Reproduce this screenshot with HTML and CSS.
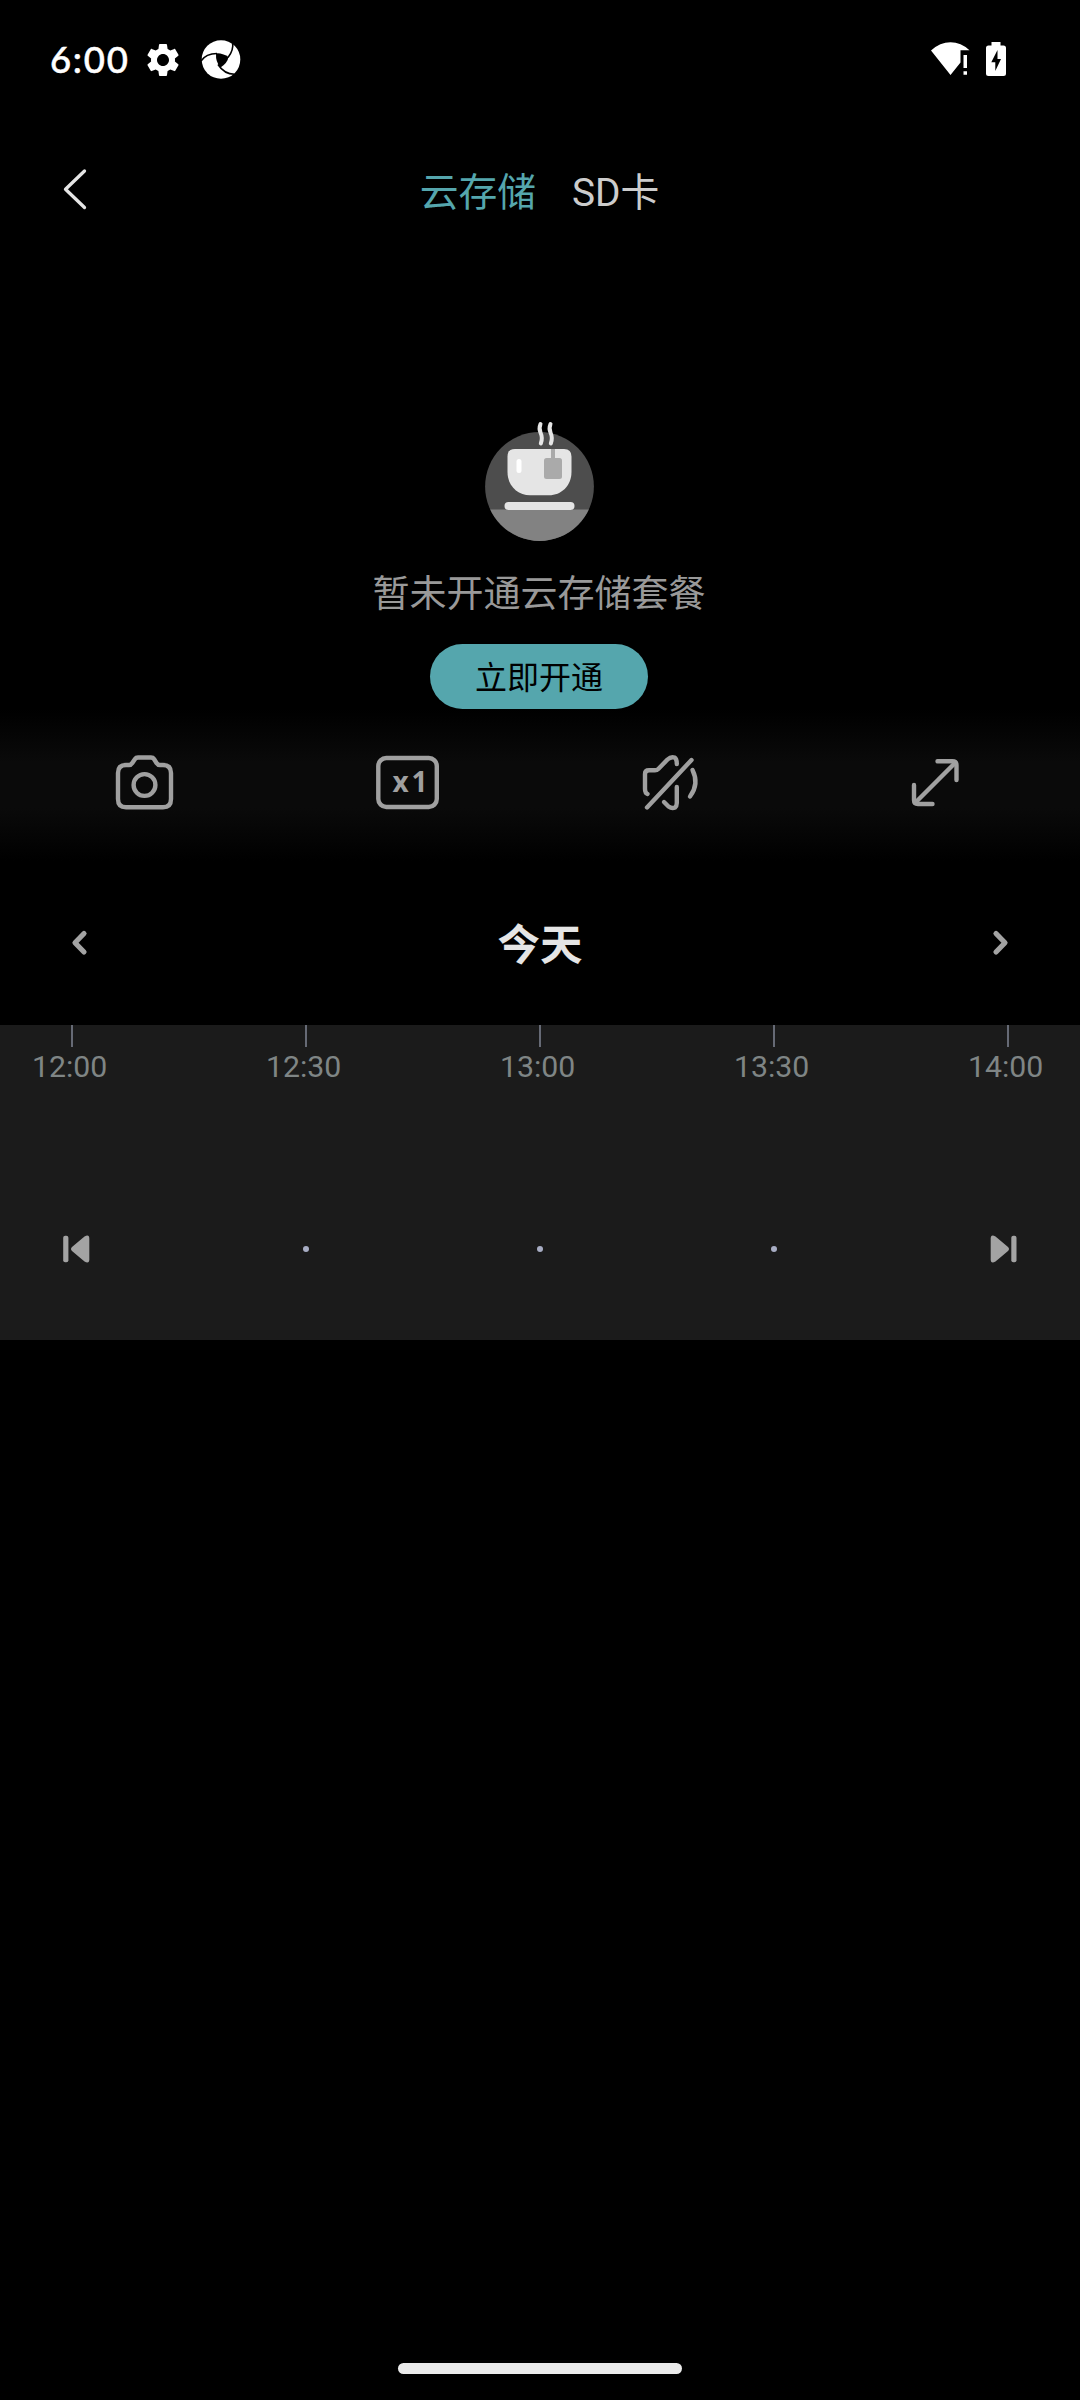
FILE: index.html
```html
<!DOCTYPE html>
<html lang="zh-CN">
<head>
<meta charset="utf-8">
<title>云存储</title>
<link rel="stylesheet" href="styles.css">
</head>
<body>
<div class="screen">
  <div class="status">
    <div class="status-left">
      <span class="clock">6:00</span>
      <svg class="gear" width="40" height="40" viewBox="0 0 24 24"><path fill="#fff" d="M19.14 12.94c.04-.3.06-.61.06-.94 0-.32-.02-.64-.07-.94l2.03-1.58c.18-.14.23-.41.12-.61l-1.92-3.32c-.12-.22-.37-.29-.59-.22l-2.39.96c-.5-.38-1.03-.7-1.62-.94l-.36-2.54c-.04-.24-.24-.41-.48-.41h-3.84c-.24 0-.43.17-.47.41l-.36 2.54c-.59.24-1.13.57-1.62.94l-2.39-.96c-.22-.08-.47 0-.59.22L2.74 8.87c-.12.21-.08.47.12.61l2.03 1.58c-.05.3-.09.63-.09.94s.02.64.07.94l-2.03 1.58c-.18.14-.23.41-.12.61l1.92 3.32c.12.22.37.29.59.22l2.39-.96c.5.38 1.03.7 1.62.94l.36 2.54c.05.24.24.41.48.41h3.84c.24 0 .44-.17.47-.41l.36-2.54c.59-.24 1.13-.56 1.62-.94l2.39.96c.22.08.47 0 .59-.22l1.92-3.32c.12-.22.07-.47-.12-.61l-2.01-1.58zM12 15.6c-1.98 0-3.6-1.62-3.6-3.6s1.62-3.6 3.6-3.6 3.6 1.62 3.6 3.6-1.62 3.6-3.6 3.6z"/></svg>
      <svg class="swirl" width="42" height="42" viewBox="200 38 42 42">
        <circle cx="221" cy="59.5" r="19.3" fill="#fff"/>
        <path d="M216 53.5Q221 52.500 228.500 57Q227.500 63 220.500 67.500Q215.500 62 216 53.500Z" fill="#000"/>
        <g fill="none" stroke="#000" stroke-width="1.6">
          <path d="M201 61Q206 53.500 217 53.500"/>
          <path d="M232.500 41.500Q234 50 228 57.500"/>
          <path d="M237.500 74Q225 75.500 218 64.500"/>
        </g>
        <path d="M228 79L236 73.500L241 75V80H228Z" fill="#000"/>
      </svg>
    </div>
    <svg width="80" height="40" viewBox="928 39 80 40">
      <path fill="#fff" d="M950.500 75L931 50.500Q940 42.300 950.500 42.300Q961 42.300 969.500 50.300H960.500V62.500Z"/>
      <path fill="#fff" d="M963.500 55H967V68H963.500ZM963.500 71.300H967V74.700H963.500Z"/>
      <path fill="#fff" d="M991.500 42H1000.500V45.500H1003.500Q1006 45.500 1006 48V73.500Q1006 76 1003.500 76H988.500Q986 76 986 73.500V48Q986 45.500 988.500 45.500H991.500Z"/>
      <path fill="#000" d="M997.500 50L991.300 62.300H995.300V71L1001 59H997.500Z"/>
    </svg>
  </div>

  <div class="header">
    <svg class="back" width="30" height="46" viewBox="60 166 30 46"><path d="M84.500 171L65.500 189.300L84.500 207.500" fill="none" stroke="#e5e5e5" stroke-width="3.300" stroke-linecap="round" stroke-linejoin="round"/></svg>
    <div class="tabs"><span class="tab active">云存储</span><span class="tab">SD卡</span></div>
  </div>

  <div class="empty">
    <svg width="116" height="124" viewBox="482 420 116 124">
      <defs><clipPath id="table"><rect x="482" y="509.500" width="116" height="40"/></clipPath></defs>
      <circle cx="539.500" cy="486.500" r="54.400" fill="#4d4d4d"/>
      <circle cx="539.500" cy="486.500" r="54.400" fill="#828282" clip-path="url(#table)"/>
      <path d="M515 449H564Q571.500 449 571.500 456.500V472C571.500 486 561 495.300 549 495.300H530C518 495.300 507.500 486 507.500 472V456.500Q507.500 449 515 449Z" fill="#e5e5e5"/>
      <rect x="516.500" y="459" width="5" height="14" rx="2.500" fill="#fff"/>
      <path d="M551 449H555V458H551Z" fill="#aaa"/>
      <rect x="544" y="458" width="18" height="21" rx="2.500" fill="#aaa"/>
      <rect x="504.500" y="502" width="70" height="8" rx="4" fill="#e5e5e5"/>
      <g fill="none" stroke="#e5e5e5" stroke-width="4" stroke-linecap="round"><path d="M540.500 424C536.500 433 545 433 540.800 443.500"/><path d="M550.500 424C546.500 433 555 433 550.800 443.500"/></g>
    </svg>
    <p class="empty-text">暂未开通云存储套餐</p>
    <button class="open">立即开通</button>
  </div>

  <div class="tools">
    <svg width="66" height="66" viewBox="111 749 66 66"><g class="line"><path d="M126 765H129Q131 765 132.300 763L135 759Q136 757.500 138 757.500H151Q153 757.500 154 759L156.500 763Q157.800 765 160 765H163Q171 765 171 773V799Q171 807.300 163 807.300H126Q118 807.300 118 799V773Q118 765 126 765Z"/><circle cx="144.500" cy="785" r="10.900"/></g></svg>
    <svg width="66" height="66" viewBox="375 749 66 66"><rect class="line" x="378.300" y="758" width="58.500" height="49" rx="8"/><text class="rate" x="392.500" y="792">x</text><text class="rate" x="411.500" y="792">1</text></svg>
    <svg width="66" height="66" viewBox="639 749 66 66"><g class="line"><path d="M647.500 794Q645 793 645 789V774Q645 770.300 649 770.300H655Q657 770.300 658.300 769L667.500 759.500Q671 756.300 674.500 757.500Q676.800 758.800 676.800 764"/><path d="M664 802L668.500 806.500Q672 809 675 807.500Q676.800 806 676.800 803V787"/><path d="M692.500 770Q699.500 784 690 796.500"/><path d="M647 807.500L691.500 760"/></g></svg>
    <svg width="66" height="66" viewBox="903 749 66 66"><g class="line"><path d="M937.500 761.300H952.500Q956.500 761.300 956.500 765.300V780"/><path d="M914 785V800Q914 804 918 804H932.500"/><path d="M916 802L955 763"/></g></svg>
  </div>

  <div class="date-row">
    <svg width="24" height="32" viewBox="68 927 24 32"><path class="step" d="M84 933.500L75 942.700L84 952"/></svg>
    <span class="date">今天</span>
    <svg width="24" height="32" viewBox="988 927 24 32"><path class="step" d="M996 933.500L1005 942.700L996 952"/></svg>
  </div>

  <div class="timeline">
    <div class="ruler">
      <div class="mark"><i></i><span>12:00</span></div>
      <div class="mark"><i></i><span>12:30</span></div>
      <div class="mark"><i></i><span>13:00</span></div>
      <div class="mark"><i></i><span>13:30</span></div>
      <div class="mark"><i></i><span>14:00</span></div>
    </div>
    <div class="controls">
      <svg width="80" height="32" viewBox="32 1233 80 32"><g fill="#a3a3a3"><rect x="63.200" y="1235.700" width="5.200" height="26.600" rx="2"/><path d="M72 1247L84.500 1236.500Q89.300 1234 89.300 1238.500V1259.500Q89.300 1264 84.500 1261.500L72 1251Q70 1249 72 1247Z"/></g></svg>
      <b class="dot"></b><b class="dot"></b><b class="dot"></b>
      <svg width="80" height="32" viewBox="968 1233 80 32"><g fill="#a3a3a3"><rect x="1011.300" y="1235.700" width="5.200" height="26.600" rx="2"/><path d="M1008 1247L995.500 1236.500Q990.700 1234 990.700 1238.500V1259.500Q990.700 1264 995.500 1261.500L1008 1251Q1010 1249 1008 1247Z"/></g></svg>
    </div>
  </div>

  <div class="home"></div>
</div>
</body>
</html>
```
FILE: styles.css
```css
* { box-sizing: border-box; }
body { margin: 0; background: #000; }
.screen {
  width: 1080px;
  height: 2400px;
  background: #000;
  display: flex;
  flex-direction: column;
  font-family: Roboto, "Noto Sans CJK SC", sans-serif;
}
svg { display: block; flex: none; }

.status {
  height: 118px;
  padding: 0 72px 0 50px;
  display: flex;
  align-items: center;
  justify-content: space-between;
}
.status-left { display: flex; align-items: center; }
.clock {
  width: 93px;
  font: 500 36.5px/40px Lato, sans-serif;
  letter-spacing: 1.7px;
  color: #fff;
  -webkit-text-stroke: 0.5px #fff;
}
.gear { margin-top: 2px; }
.swirl { margin-left: 17px; }

.header {
  height: 144px;
  display: grid;
  grid-template-columns: 60px 1fr 60px;
  align-items: center;
}
.back { margin-left: 60px; margin-bottom: 2px; }
.tabs {
  display: flex;
  justify-content: center;
  gap: 36px;
  padding-top: 5px;
  padding-right: 1px;
  font-size: 38.8px;
  line-height: 46px;
  color: #ccc;
}
.tab.active { color: #55a6ad; }

.empty {
  height: 447px;
  padding-top: 158px;
  display: flex;
  flex-direction: column;
  align-items: center;
}
.empty-text {
  margin: 24px 2px 0 0;
  font-size: 37px;
  line-height: 54px;
  color: #999;
}
.open {
  width: 218px;
  height: 65px;
  margin: 22px 2px 0 0;
  padding: 3px 0 0;
  border: 0;
  border-radius: 33px;
  background: #55a6ad;
  color: #000;
  font: 32px/62px Roboto, "Noto Sans CJK SC", sans-serif;
}

.tools {
  height: 152px;
  padding: 0 111px 6px;
  display: flex;
  justify-content: space-between;
  align-items: center;
  background: linear-gradient(#000, #0a0a0a 35%, #0a0a0a 65%, #000);
}
.line {
  fill: none;
  stroke: #a0a0a0;
  stroke-width: 4.4px;
  stroke-linecap: round;
  stroke-linejoin: round;
}
.rate { font: 700 28px "Open Sans", sans-serif; fill: #a0a0a0; }

.date-row {
  height: 164px;
  padding: 0 68px;
  display: flex;
  align-items: center;
  justify-content: space-between;
}
.date {
  padding-top: 5px;
  font-size: 42.5px;
  line-height: 60px;
  font-weight: 700;
  color: #e5e5e5;
}
.step {
  fill: none;
  stroke: #a3a3a3;
  stroke-width: 5.2px;
  stroke-linecap: round;
  stroke-linejoin: round;
}

.timeline { height: 315px; background: #1b1b1b; }
.ruler {
  height: 208px;
  padding: 0 32px;
  display: flex;
  justify-content: space-between;
}
.mark { width: 80px; }
.mark i {
  display: block;
  width: 2px;
  height: 22px;
  margin: 0 auto;
  background: #666a75;
}
.mark span {
  display: block;
  font-size: 30.25px;
  line-height: 36px;
  margin-top: 2px;
  color: #7f8585;
}
.controls {
  padding: 0 32px;
  display: flex;
  align-items: center;
  justify-content: space-between;
}
.dot {
  width: 6px;
  height: 6px;
  margin: 0 37px;
  border-radius: 50%;
  background: #a8adc4;
}

.home {
  width: 284px;
  height: 11px;
  margin: auto auto 26px;
  border-radius: 6px;
  background: #ebebeb;
}
```
